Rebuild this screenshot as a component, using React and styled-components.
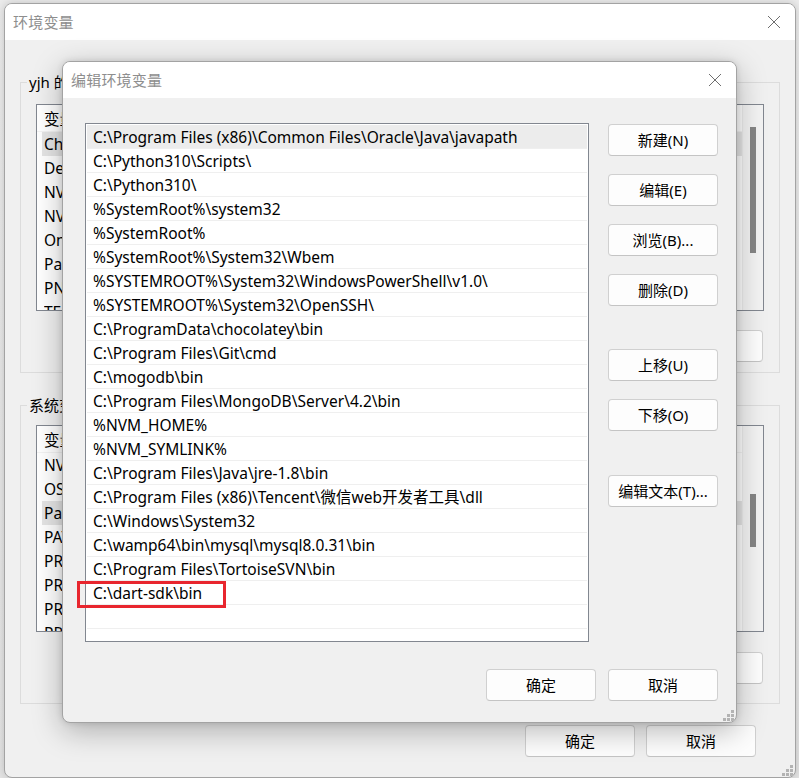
import React from "react";
import styled, { createGlobalStyle } from "styled-components";

const FONT = `"Noto Sans", "Noto Sans CJK SC", sans-serif`;

const GlobalStyle = createGlobalStyle`
  html, body { margin: 0; padding: 0; }
  body {
    width: 799px; height: 778px; overflow: hidden;
    background: #e6e6e6;
    font-family: ${FONT};
    font-size: 15px;
    color: #000;
  }
  * { box-sizing: border-box; }
`;

const Desktop = styled.div`
  position: relative;
  width: 799px;
  height: 778px;
  overflow: hidden;
  background: linear-gradient(#ececec, #e4e4e4);
`;

const Window = styled.div`
  position: absolute;
  left: ${(p) => p.$left}px;
  top: ${(p) => p.$top}px;
  width: ${(p) => p.$width}px;
  height: ${(p) => p.$height}px;
  border: 1px solid #a3a3a3;
  border-radius: 8px;
  background: #f0f0f0;
  overflow: hidden;
  display: flex;
  flex-direction: column;
  box-shadow: ${(p) => p.$shadow};
`;

const TitleBar = styled.div`
  height: 36px;
  flex: none;
  background: #fff;
  display: flex;
  align-items: center;
  justify-content: space-between;
  padding-left: 8px;
`;

const Title = styled.span`
  font-size: 15px;
  line-height: 20px;
  color: #8e8e8e;
  letter-spacing: 0.2px;
`;

const CloseBox = styled.div`
  width: 42px;
  height: 36px;
  display: flex;
  align-items: center;
  justify-content: center;
`;

const CloseIcon = () => (
  <svg width="14" height="14" viewBox="0 0 14 14">
    <path d="M1 1 L13 13 M13 1 L1 13" stroke="#6e6e6e" strokeWidth="1" fill="none" />
  </svg>
);

/* ---------- outer dialog ---------- */

const OuterBody = styled.div`
  flex: 1;
  padding: 32px 15px 0 15px;
  display: flex;
  flex-direction: column;
`;

const Group = styled.fieldset`
  margin: ${(p) => p.$mt}px 0 0 0;
  border: 1px solid #dcdcdc;
  padding: ${(p) => p.$pt}px 15px ${(p) => p.$pb}px 15px;
  min-width: 0;
`;

const Legend = styled.legend`
  font-size: 15px;
  line-height: 20px;
  padding: 0 2px;
  margin-left: -9px;
  color: #000;
`;

const VarList = styled.div`
  height: 207px;
  border: 1px solid #828790;
  background: #fff;
  display: flex;
  overflow: hidden;
`;

const VarContent = styled.div`
  flex: 1;
  min-width: 0;
`;

const VarHeader = styled.div`
  height: 27px;
  display: grid;
  grid-template-columns: 216px 1fr;
  align-items: center;
  padding-left: 7px;
  border-bottom: 1px solid #f3f3f3;
  white-space: nowrap;
  font-size: 15.5px;
`;

const VarRow = styled.div`
  height: 24px;
  margin-left: 5px;
  padding-left: 2px;
  display: grid;
  grid-template-columns: 214px 1fr;
  align-items: center;
  white-space: nowrap;
  overflow: hidden;
  font-size: 15.5px;
  background: ${(p) => (p.$selected ? "#e5e5e5" : "transparent")};
`;

const Cell = styled.span`
  overflow: hidden;
  text-overflow: clip;
`;

const ScrollTrack = styled.div`
  position: relative;
  width: 21px;
  flex: none;
  background: #f3f3f3;
  border-left: 1px solid #ececec;
`;

const ScrollThumb = styled.div`
  position: absolute;
  left: 7px;
  width: 6px;
  top: ${(p) => p.$top}px;
  height: ${(p) => p.$h}px;
  background: #858585;
`;

const ButtonRow = styled.div`
  display: flex;
  justify-content: flex-end;
  gap: ${(p) => p.$gap || 12}px;
  margin-top: ${(p) => p.$mt}px;
  padding-right: ${(p) => p.$pr || 0}px;
`;

const Button = styled.div`
  width: 110px;
  height: 32px;
  flex: none;
  margin-top: ${(p) => p.$mt || 0}px;
  border: 1px solid #d0d0d0;
  border-bottom-color: #c4c4c4;
  border-radius: 4px;
  background: #fdfdfd;
  display: flex;
  align-items: center;
  justify-content: center;
  font-size: 15px;
  line-height: 20px;
  padding-bottom: 1px;
  color: #000;
  white-space: nowrap;
`;

const Grip = styled.svg`
  position: absolute;
  right: ${(p) => p.$r}px;
  bottom: ${(p) => p.$b}px;
`;

const GripIcon = ({ r, b }) => (
  <Grip $r={r} $b={b} width="11" height="11" viewBox="0 0 11 11">
    <g fill="#b3b3b3">
      <rect x="8" y="0" width="3" height="3" />
      <rect x="4" y="4" width="3" height="3" />
      <rect x="8" y="4" width="3" height="3" />
      <rect x="0" y="8" width="3" height="3" />
      <rect x="4" y="8" width="3" height="3" />
      <rect x="8" y="8" width="3" height="3" />
    </g>
  </Grip>
);

/* ---------- inner dialog ---------- */

const InnerBody = styled.div`
  flex: 1;
  display: flex;
  flex-direction: column;
  padding: 25px 18px 0 22px;
`;

const InnerMain = styled.div`
  display: grid;
  grid-template-columns: 504px 110px;
  column-gap: 19px;
  align-items: start;
`;

const PathList = styled.div`
  height: 519px;
  border: 1px solid #828790;
  background: #fff;
  padding: 1px;
  overflow: hidden;
`;

const PathRow = styled.div`
  height: 24px;
  padding-left: 6px;
  display: flex;
  align-items: center;
  border-bottom: 1px solid #efefef;
  white-space: nowrap;
  font-size: 15.5px;
  background: ${(p) => (p.$selected ? "#ececec" : "transparent")};
`;

const ButtonStack = styled.div`
  display: flex;
  flex-direction: column;
`;

const InnerFooter = styled.div`
  display: flex;
  justify-content: flex-end;
  gap: 12px;
  margin-top: 27px;
`;

const Highlight = styled.div`
  position: absolute;
  left: 14px;
  top: 519px;
  width: 149px;
  height: 27px;
  border: 3px solid #e8262e;
  pointer-events: none;
`;

const userVars = [
  ["ChocolateyLastPathUpdate", "133189046254711892"],
  ["DevEco Studio", "D:\\Huawei\\DevEco Studio\\bin;"],
  ["NVM_HOME", "C:\\Users\\yjh\\AppData\\Roaming\\nvm"],
  ["NVM_SYMLINK", "C:\\Program Files\\nodejs"],
  ["OneDrive", "C:\\Users\\yjh\\OneDrive"],
  ["Path", "C:\\Users\\yjh\\AppData\\Local\\Microsoft\\WindowsApps;"],
  ["PNPM_HOME", "C:\\Users\\yjh\\AppData\\Local\\pnpm"],
  ["TEMP", "C:\\Users\\yjh\\AppData\\Local\\Temp"],
];

const sysVars = [
  ["NVM_SYMLINK", "C:\\Program Files\\nodejs"],
  ["OS", "Windows_NT"],
  ["Path", "C:\\Program Files (x86)\\Common Files\\Oracle\\Java\\javapath;"],
  ["PATHEXT", ".COM;.EXE;.BAT;.CMD;.VBS;.VBE;.JS;.JSE;.WSF;.WSH;.MSC"],
  ["PROCESSOR_ARCHITECTURE", "AMD64"],
  ["PROCESSOR_IDENTIFIER", "Intel64 Family 6 Model 154 Stepping 3"],
  ["PROCESSOR_LEVEL", "6"],
  ["PROCESSOR_REVISION", "9a03"],
  ["PSModulePath", "%ProgramFiles%\\WindowsPowerShell\\Modules"],
];

const paths = [
  "C:\\Program Files (x86)\\Common Files\\Oracle\\Java\\javapath",
  "C:\\Python310\\Scripts\\",
  "C:\\Python310\\",
  "%SystemRoot%\\system32",
  "%SystemRoot%",
  "%SystemRoot%\\System32\\Wbem",
  "%SYSTEMROOT%\\System32\\WindowsPowerShell\\v1.0\\",
  "%SYSTEMROOT%\\System32\\OpenSSH\\",
  "C:\\ProgramData\\chocolatey\\bin",
  "C:\\Program Files\\Git\\cmd",
  "C:\\mogodb\\bin",
  "C:\\Program Files\\MongoDB\\Server\\4.2\\bin",
  "%NVM_HOME%",
  "%NVM_SYMLINK%",
  "C:\\Program Files\\Java\\jre-1.8\\bin",
  "C:\\Program Files (x86)\\Tencent\\微信web开发者工具\\dll",
  "C:\\Windows\\System32",
  "C:\\wamp64\\bin\\mysql\\mysql8.0.31\\bin",
  "C:\\Program Files\\TortoiseSVN\\bin",
  "C:\\dart-sdk\\bin",
  "",
  "",
];

const VarTable = ({ rows, selected, thumbTop, thumbH }) => (
  <VarList>
    <VarContent>
      <VarHeader>
        <Cell>变量</Cell>
        <Cell>值</Cell>
      </VarHeader>
      {rows.map(([k, v], i) => (
        <VarRow key={i} $selected={i === selected}>
          <Cell>{k}</Cell>
          <Cell>{v}</Cell>
        </VarRow>
      ))}
    </VarContent>
    <ScrollTrack>
      <ScrollThumb $top={thumbTop} $h={thumbH} />
    </ScrollTrack>
  </VarList>
);

export default function App() {
  return (
    <>
      <GlobalStyle />
      <Desktop>
        <Window
          $left={4}
          $top={3}
          $width={792}
          $height={775}
          $shadow="0 0 10px rgba(0,0,0,0.18)"
        >
          <TitleBar>
            <Title>环境变量</Title>
            <CloseBox>
              <CloseIcon />
            </CloseBox>
          </TitleBar>
          <OuterBody>
            <Group $mt={0} $pt={12} $pb={10}>
              <Legend>yjh 的用户变量(U)</Legend>
              <VarTable rows={userVars} selected={0} thumbTop={22} thumbH={126} />
              <ButtonRow $mt={19} $pr={1}>
                <Button>新建(N)...</Button>
                <Button>编辑(E)...</Button>
                <Button>删除(D)</Button>
              </ButtonRow>
            </Group>
            <Group $mt={22} $pt={10} $pb={19}>
              <Legend>系统变量(S)</Legend>
              <VarTable rows={sysVars} selected={2} thumbTop={68} thumbH={53} />
              <ButtonRow $mt={20} $pr={1}>
                <Button>新建(W)...</Button>
                <Button>编辑(I)...</Button>
                <Button>删除(L)</Button>
              </ButtonRow>
            </Group>
            <ButtonRow $mt={21} $pr={24} $gap={11}>
              <Button>确定</Button>
              <Button>取消</Button>
            </ButtonRow>
          </OuterBody>
          <GripIcon r={2} b={1} />
        </Window>

        <Window
          $left={62}
          $top={61}
          $width={675}
          $height={662}
          $shadow="0 8px 30px rgba(0,0,0,0.28), 0 0 6px rgba(0,0,0,0.12)"
        >
          <TitleBar>
            <Title>编辑环境变量</Title>
            <CloseBox>
              <CloseIcon />
            </CloseBox>
          </TitleBar>
          <InnerBody>
            <InnerMain>
              <PathList>
                {paths.map((p, i) => (
                  <PathRow key={i} $selected={i === 0}>
                    {p}
                  </PathRow>
                ))}
              </PathList>
              <ButtonStack>
                <Button $mt={1}>新建(N)</Button>
                <Button $mt={18}>编辑(E)</Button>
                <Button $mt={18}>浏览(B)...</Button>
                <Button $mt={18}>删除(D)</Button>
                <Button $mt={43}>上移(U)</Button>
                <Button $mt={18}>下移(O)</Button>
                <Button $mt={44}>编辑文本(T)...</Button>
              </ButtonStack>
            </InnerMain>
            <InnerFooter>
              <Button>确定</Button>
              <Button>取消</Button>
            </InnerFooter>
          </InnerBody>
          <Highlight />
          <GripIcon r={2} b={1} />
        </Window>
      </Desktop>
    </>
  );
}
